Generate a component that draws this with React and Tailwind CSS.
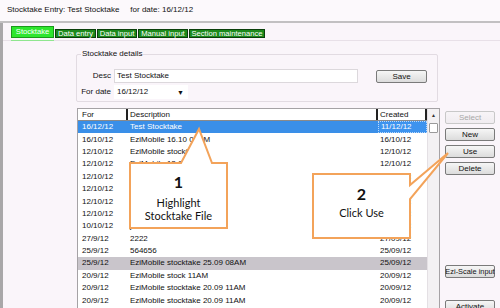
import React from "react";

const rows = [
  ["16/12/12", "Test Stocktake", "11/12/12", "sel"],
  ["16/10/12", "EziMobile 16.10 01PM", "16/10/12"],
  ["12/10/12", "EziMobile stock08AM", "12/10/12"],
  ["12/10/12", "EziMobile 12.10", "12/10/12"],
  ["12/10/12", "EziMobile 12.10 b", "12/10/12"],
  ["12/10/12", "stock 3", "12/10/12"],
  ["12/10/12", "stock 2", "12/10/12"],
  ["12/10/12", "stock 1", "12/10/12"],
  ["10/10/12", "john", "10/10/12"],
  ["27/9/12", "2222", "27/09/12"],
  ["25/9/12", "564656", "25/09/12"],
  ["25/9/12", "EziMobile stocktake 25.09 08AM", "25/09/12", "gray"],
  ["20/9/12", "EziMobile stock 11AM", "20/09/12"],
  ["20/9/12", "EziMobile stocktake 20.09 11AM", "20/09/12"],
  ["20/9/12", "EziMobile stocktake 20.09 11AM", "20/09/12"],
];

function Btn({ children, disabled }) {
  return (
    <div
      className={
        "h-[13px] w-[50px] flex items-center justify-center rounded-[2px] border text-[8px] leading-none bg-gradient-to-b " +
        (disabled
          ? "border-[#c8c8c8] text-[#a8a8a8] from-[#f7f4f7] to-[#f0ecf0]"
          : "border-[#7a7a7a] text-[#111] from-[#f6f6f6] to-[#dcdcdc]")
      }
    >
      {children}
    </div>
  );
}

export default function App() {
  return (
    <div
      className="relative w-[500px] h-[308px] overflow-hidden bg-[#faf5fa] flex flex-col text-[#111]"
      style={{ fontFamily: '"Liberation Sans", Arial, sans-serif' }}
    >
      {/* title */}
      <div className="h-[21px] shrink-0 flex items-center pl-[7px] text-[8px] leading-none pb-[2px] bg-[#fcf9fc] whitespace-nowrap">
        <span>Stocktake Entry: Test Stocktake</span>
        <span className="ml-[11px]">for date: 16/12/12</span>
      </div>
      <div className="h-[2px] shrink-0 bg-[#c2c0c2]" />
      {/* body */}
      <div className="flex-1 flex flex-col border-l-[3px] border-[#a9a7a9]">
        {/* tabs */}
        <div className="h-[15px] shrink-0 flex items-start pt-[3px] pl-[8px] gap-[1px] text-[7.6px] leading-none text-white whitespace-nowrap">
          <div className="w-[43px] h-[12px] flex items-center justify-center bg-[#2ee62e] border border-[#1a9a1a]">Stocktake</div>
          <div className="w-[41px] h-[9px] mt-[3px] flex items-center justify-center bg-[#1c8a1c] border border-[#0b3f0b]">Data entry</div>
          <div className="w-[40px] h-[9px] mt-[3px] flex items-center justify-center bg-[#1c8a1c] border border-[#0b3f0b]">Data input</div>
          <div className="w-[50px] h-[9px] mt-[3px] flex items-center justify-center bg-[#1c8a1c] border border-[#0b3f0b]">Manual input</div>
          <div className="w-[76px] h-[9px] mt-[3px] flex items-center justify-center bg-[#1c8a1c] border border-[#0b3f0b] overflow-hidden">Section maintenance</div>
        </div>
        <div className="h-[2px] shrink-0" />
        <div className="h-[1px] shrink-0 bg-[#e8e0e8] flex pl-[8px]">
          <div className="w-[43px] h-[1px] bg-[#8fe68f]" />
        </div>
        {/* panel */}
        <div className="flex-1 flex pl-[73px]">
          {/* center column */}
          <div className="w-[364px] flex flex-col">
            <div className="mt-[13px] w-[362px] border border-[#e2dbe2] rounded-[2px] flex flex-col pb-[2px]">
              <div className="-mt-[6px] ml-[4px] self-start px-[1px] bg-[#faf5fa] text-[8px] leading-[10px]">
                Stocktake details
              </div>
              <div className="mt-[10px] flex items-start text-[8px]">
                <div className="w-[34px] h-[14px] flex items-center justify-end leading-none">Desc</div>
                <div className="ml-[3px] w-[244px] h-[14px] bg-white border border-[#dcd8dc] flex items-center pl-[2px] leading-none">
                  Test Stocktake
                </div>
                <div className="ml-[18px] mt-[1px] w-[51px] h-[13px] flex items-center justify-center rounded-[2px] border border-[#7a7a7a] bg-gradient-to-b from-[#f6f6f6] to-[#dcdcdc] leading-none">
                  Save
                </div>
              </div>
              <div className="mt-[2px] flex items-start text-[8px]">
                <div className="w-[34px] h-[14px] flex items-center justify-end leading-none whitespace-nowrap">For date</div>
                <div className="ml-[3px] w-[74px] h-[14px] bg-white flex items-center justify-between pl-[3px] pr-[4px] leading-none">
                  <span>16/12/12</span>
                  <span className="text-[7px]">▼</span>
                </div>
              </div>
            </div>
            {/* list */}
            <div className="mt-[6px] ml-[1px] w-[363px] flex-1 border border-[#a5a2a5] bg-white flex overflow-hidden text-[8px] leading-none">
              <div className="w-[349px] flex flex-col">
                <div className="h-[12px] shrink-0 flex border-b border-[#8a8a8a]">
                  <div className="w-[50px] border-r-2 border-[#222] flex items-center pl-[4px]">For</div>
                  <div className="w-[250px] border-r-2 border-[#222] flex items-center pl-[2px]">Description</div>
                  <div className="w-[49px] border-r-2 border-[#222] flex items-center pl-[2px]">Created</div>
                </div>
                {rows.map((r, i) => (
                  <div
                    key={i}
                    className={
                      "h-[12.4px] shrink-0 flex " +
                      (r[3] === "sel" ? "bg-[#3a8fe8] text-white" : r[3] === "gray" ? "bg-[#c9c5cb]" : "")
                    }
                  >
                    <div className="w-[50px] flex items-center pl-[4px] whitespace-nowrap">{r[0]}</div>
                    <div className="w-[250px] flex items-center pl-[2px] whitespace-nowrap">{r[1]}</div>
                    <div
                      className={
                        "w-[49px] flex items-center pl-[2px] whitespace-nowrap " +
                        (r[3] === "sel" ? "border border-dotted border-[#b8d8fa] bg-[#3d93ee]" : "")
                      }
                    >
                      {r[2]}
                    </div>
                  </div>
                ))}
              </div>
              {/* scrollbar */}
              <div className="w-[12px] border-l border-[#e4e0e4] bg-[#f3f1f3] flex flex-col items-center">
                <div className="h-[12px] flex items-center justify-center text-[5px] text-[#333]">▲</div>
                <div className="mt-[2px] w-[9px] h-[10px] bg-white border border-[#9a9a9a] rounded-[1px]" />
              </div>
            </div>
          </div>
          {/* right column */}
          <div className="ml-[5px] w-[50px] flex flex-col pt-[70px] gap-[4px]">
            <Btn disabled>Select</Btn>
            <Btn>New</Btn>
            <Btn>Use</Btn>
            <Btn>Delete</Btn>
            <div className="mt-[86px] h-[13px] w-[50px] flex items-center justify-center rounded-[2px] border border-[#7a7a7a] bg-gradient-to-b from-[#f6f6f6] to-[#dcdcdc] text-[7.4px] leading-none whitespace-nowrap">
              Ezi-Scale input
            </div>
            <div className="mt-[18px]">
              <Btn>Activate</Btn>
            </div>
          </div>
        </div>
      </div>

      {/* callouts overlay */}
      <svg className="absolute left-0 top-0 pointer-events-none" width="500" height="308" viewBox="0 0 500 308">
        <polygon
          points="130,163 181,163 199,129 212,163 227,163 227,228 130,228"
          fill="white"
          stroke="#f3a35a"
          strokeWidth="2"
          strokeLinejoin="miter"
        />
        <polygon
          points="313,174 410,174 410,185 448,153 410,199 410,238 313,238"
          fill="white"
          stroke="#f3a35a"
          strokeWidth="2"
          strokeLinejoin="miter"
        />
      </svg>
      <div
        className="absolute left-[131px] top-[164px] w-[95px] flex flex-col items-center text-[#111]"
        style={{ fontFamily: "Lato, 'Open Sans', sans-serif" }}
      >
        <div className="mt-[10px] text-[16px] leading-[16px] font-bold">1</div>
        <div className="mt-[6px] text-[11px] leading-[13px]">Highlight</div>
        <div className="text-[11px] leading-[13px]">Stocktake File</div>
      </div>
      <div
        className="absolute left-[314px] top-[175px] w-[95px] flex flex-col items-center text-[#111]"
        style={{ fontFamily: "Lato, 'Open Sans', sans-serif" }}
      >
        <div className="mt-[11px] text-[16px] leading-[16px] font-bold">2</div>
        <div className="mt-[4px] text-[11px] leading-[13px]">Click Use</div>
      </div>
    </div>
  );
}
